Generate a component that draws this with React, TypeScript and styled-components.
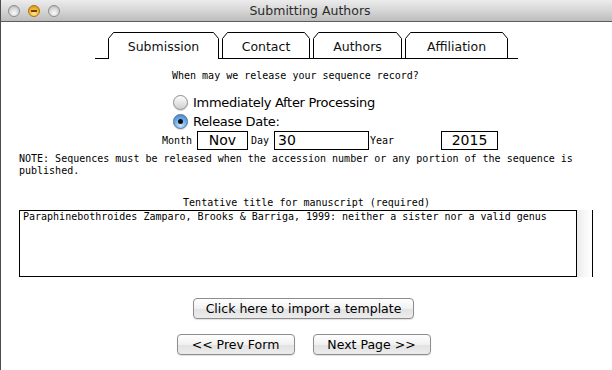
import React from 'react';
import styled, { createGlobalStyle } from 'styled-components';

const GlobalStyle = createGlobalStyle`
  html, body {
    margin: 0;
    padding: 0;
    background: #fff;
  }
  body {
    width: 612px;
    height: 370px;
    overflow: hidden;
  }
`;

const ui = `"DejaVu Sans", "Liberation Sans", sans-serif`;
const mono = `"DejaVu Sans Mono", "Liberation Mono", monospace`;

const Window = styled.div`
  display: flex;
  flex-direction: column;
  width: 612px;
  height: 370px;
  box-sizing: border-box;
  border-left: 1px solid #4d4d4d;
  background: #fff;
`;

const TitleBar = styled.div`
  display: grid;
  grid-template-columns: 1fr auto 1fr;
  align-items: center;
  height: 22px;
  box-sizing: border-box;
  padding-left: 7px;
  background: linear-gradient(#ececec, #d6d6d6 50%, #bcbcbc);
  border-bottom: 1px solid #5c5c5c;
`;

const Lights = styled.div`
  display: flex;
  gap: 8px;
  align-items: center;
`;

interface LightProps {
  readonly tone: 'grey' | 'yellow';
}

const Light = styled.span<LightProps>`
  position: relative;
  width: 12px;
  height: 12px;
  box-sizing: border-box;
  border-radius: 50%;
  border: 1px solid ${({ tone }) => (tone === 'yellow' ? '#a9720f' : '#8e8e8e')};
  background: ${({ tone }) =>
    tone === 'yellow'
      ? 'radial-gradient(circle at 50% 75%, #ffe88a, #f2b134 55%, #cf860c)'
      : 'radial-gradient(circle at 50% 70%, #fafafa, #d2d2d2 60%, #a9a9a9)'};

  &::after {
    content: '';
    display: ${({ tone }) => (tone === 'yellow' ? 'block' : 'none')};
    position: absolute;
    left: 2px;
    top: 4px;
    width: 6px;
    height: 2px;
    background: #6e4300;
  }
`;

const Title = styled.div`
  font-family: ${ui};
  font-size: 12.5px;
  color: #2b2b2b;
`;

const Content = styled.div`
  display: flex;
  flex-direction: column;
  flex: 1;
`;

const TabRow = styled.div`
  display: flex;
  align-items: flex-end;
  gap: 3px;
  width: 423px;
  box-sizing: border-box;
  margin: 10px 0 0 94px;
  padding-left: 13px;
  border-bottom: 1px solid #000;
`;

interface TabProps {
  readonly w: number;
  readonly active?: boolean;
}

const TabBox = styled.div<TabProps>`
  position: relative;
  display: flex;
  align-items: center;
  justify-content: center;
  width: ${({ w }) => w}px;
  height: ${({ active }) => (active ? 27 : 26)}px;
  margin-bottom: ${({ active }) => (active ? -1 : 0)}px;
  box-sizing: border-box;
  padding-top: 2px;
  z-index: ${({ active }) => (active ? 1 : 0)};
  font-family: ${ui};
  font-size: 12.5px;
  color: #111;

  svg {
    position: absolute;
    inset: 0;
  }

  span {
    position: relative;
  }
`;

const Tab: React.FC<{ label: string; w: number; active?: boolean }> = ({
  label,
  w,
  active,
}) => {
  const h = active ? 27 : 26;
  return (
    <TabBox w={w} active={active}>
      <svg width={w} height={h}>
        <path
          d={`M0.5 ${h} V6.5 L5.5 0.5 H${w - 5.5} L${w - 0.5} 6.5 V${h}`}
          fill="#fff"
          stroke="#000"
          strokeWidth={1}
        />
      </svg>
      <span>{label}</span>
    </TabBox>
  );
};

const MonoLine = styled.div`
  font-family: ${mono};
  font-size: 10px;
  line-height: 12px;
  color: #000;
  white-space: pre;
`;

const Question = styled(MonoLine)`
  margin: 11px 0 0 171px;
`;

const RadioGroup = styled.div`
  display: flex;
  flex-direction: column;
  margin: 11px 0 0 172px;
`;

const RadioRow = styled.label`
  display: flex;
  align-items: center;
  gap: 5px;
  height: 19px;
  font-family: ${ui};
  font-size: 13px;
  letter-spacing: -0.3px;
  color: #000;
`;

const Radio = styled.input.attrs({ type: 'radio' })`
  appearance: none;
  position: relative;
  margin: 0;
  width: 15px;
  height: 15px;
  box-sizing: border-box;
  border-radius: 50%;
  border: 1px solid #8c8c8c;
  background: linear-gradient(#fdfdfd, #e2e2e2 60%, #cfcfcf);
  box-shadow: 0 1px 1px rgba(0, 0, 0, 0.15);

  &:checked {
    border-color: #4b6e98;
    background: radial-gradient(circle at 50% 80%, #c9e6ff, #77b1ec 45%, #3f7fcc);
  }

  &:checked::after {
    content: '';
    position: absolute;
    left: 4px;
    top: 4px;
    width: 5px;
    height: 5px;
    border-radius: 50%;
    background: #111;
  }
`;

const DateRow = styled.div`
  display: grid;
  grid-template-columns: 35px 54px 23px 96px 71px 57px;
  align-items: center;
  height: 19px;
  margin-left: 161px;
`;

const DateLabel = styled(MonoLine)``;

interface FieldProps {
  readonly w: number;
  readonly align: 'left' | 'center';
}

const Field = styled.div<FieldProps>`
  width: ${({ w }) => w}px;
  height: 19px;
  box-sizing: border-box;
  border: 1px solid #000;
  padding: 0 3px;
  font-family: ${ui};
  font-size: 14px;
  line-height: 17px;
  text-align: ${({ align }) => align};
  color: #000;
`;

const Note = styled.div`
  margin: 3px 0 0 18px;
  width: 575px;
  font-family: ${mono};
  font-size: 10px;
  line-height: 12px;
  color: #000;
`;

const Caption = styled(MonoLine)`
  margin-top: 20px;
  text-align: center;
`;

const TextBoxRow = styled.div`
  display: flex;
  margin: 1px 0 0 18px;
`;

const TextArea = styled.div`
  width: 558px;
  height: 67px;
  box-sizing: border-box;
  border: 1px solid #000;
  padding: 0 3px;
  font-family: ${mono};
  font-size: 10px;
  line-height: 12px;
  color: #000;
`;

const Gutter = styled.div`
  width: 16px;
  height: 67px;
  box-sizing: border-box;
  border-right: 1px solid #000;
  background: linear-gradient(to right, #ebebeb, #f7f7f7 50%, #fff);
`;

interface ButtonRowProps {
  readonly top: number;
}

const ButtonRow = styled.div<ButtonRowProps>`
  display: flex;
  justify-content: center;
  gap: 18px;
  margin-top: ${({ top }) => top}px;
  padding-right: 6px;
`;

interface ButtonProps {
  readonly w: number;
}

const Button = styled.button<ButtonProps>`
  width: ${({ w }) => w}px;
  height: 21px;
  box-sizing: border-box;
  margin: 0;
  padding: 0;
  border: 1px solid #8d8d8d;
  border-radius: 4px;
  background: linear-gradient(#ffffff, #f1f1f1 50%, #e2e2e2 51%, #ececec);
  box-shadow: 0 1px 1px rgba(0, 0, 0, 0.12);
  font-family: ${ui};
  font-size: 12.5px;
  color: #000;
`;

export default function App() {
  return (
    <>
      <GlobalStyle />
      <Window>
        <TitleBar>
          <Lights>
            <Light tone="grey" />
            <Light tone="yellow" />
            <Light tone="grey" />
          </Lights>
          <Title>Submitting Authors</Title>
          <div />
        </TitleBar>
        <Content>
          <TabRow>
            <Tab label="Submission" w={111} active />
            <Tab label="Contact" w={88} />
            <Tab label="Authors" w={89} />
            <Tab label="Affiliation" w={103} />
          </TabRow>
          <Question>When may we release your sequence record?</Question>
          <RadioGroup>
            <RadioRow>
              <Radio name="release" />
              Immediately After Processing
            </RadioRow>
            <RadioRow>
              <Radio name="release" defaultChecked />
              Release Date:
            </RadioRow>
          </RadioGroup>
          <DateRow>
            <DateLabel>Month</DateLabel>
            <Field w={51} align="center">Nov</Field>
            <DateLabel>Day</DateLabel>
            <Field w={95} align="left">30</Field>
            <DateLabel>Year</DateLabel>
            <Field w={57} align="center">2015</Field>
          </DateRow>
          <Note>
            NOTE: Sequences must be released when the accession number or any
            portion of the sequence is published.
          </Note>
          <Caption>Tentative title for manuscript (required)</Caption>
          <TextBoxRow>
            <TextArea>
              Paraphinebothroides Zamparo, Brooks &amp; Barriga, 1999: neither a
              sister nor a valid genus
            </TextArea>
            <Gutter />
          </TextBoxRow>
          <ButtonRow top={21}>
            <Button w={221}>Click here to import a template</Button>
          </ButtonRow>
          <ButtonRow top={15}>
            <Button w={118}>&lt;&lt; Prev Form</Button>
            <Button w={118}>Next Page &gt;&gt;</Button>
          </ButtonRow>
        </Content>
      </Window>
    </>
  );
}
